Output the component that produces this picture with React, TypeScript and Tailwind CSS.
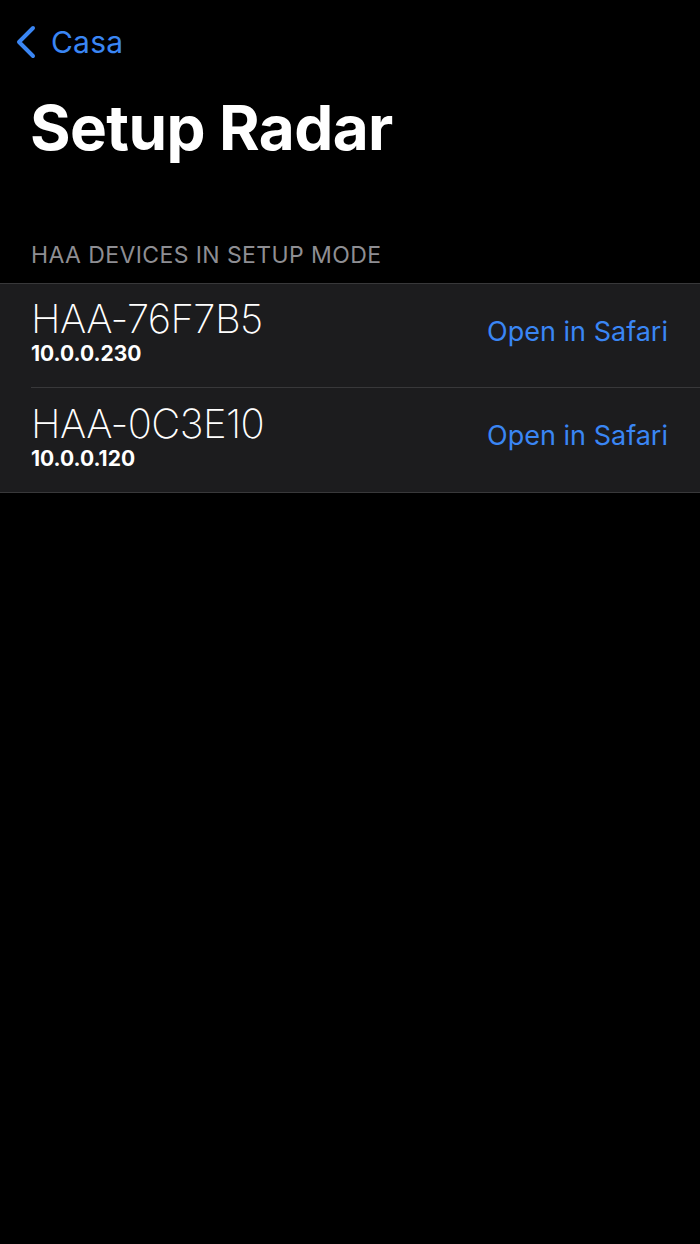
const devices = [
  { name: 'HAA-76F7B5', ip: '10.0.0.230' },
  { name: 'HAA-0C3E10', ip: '10.0.0.120' },
]

function Chevron() {
  return (
    <svg width="22" height="34" viewBox="0 0 22 34" fill="none" className="shrink-0">
      <path d="M18 3 L4 17 L18 31" stroke="#3a86f4" strokeWidth="4" strokeLinecap="round" strokeLinejoin="round" />
    </svg>
  )
}

export default function App() {
  return (
    <div className="min-h-[1244px] w-full bg-black font-['Inter','Liberation_Sans',sans-serif] text-white">
      {/* Nav bar */}
      <div className="flex h-[84px] items-start pl-[15px] pt-[24px]">
        <button className="flex items-center gap-[14px] text-[30px] leading-[36px] text-[#3a86f4]">
          <Chevron />
          <span className="tracking-[0.2px]">Casa</span>
        </button>
      </div>

      {/* Large title */}
      <h1 className="pl-[30px] text-[62px] font-bold leading-[88px] tracking-[-0.6px]">Setup Radar</h1>

      {/* Section header */}
      <div className="mt-[68px] pb-[13px] pl-[31px] text-[23px] leading-[30px] tracking-[0.4px] text-[#8e8e93]">
        HAA DEVICES IN SETUP MODE
      </div>

      {/* List */}
      <div className="border-y border-[#38383a] bg-[#1c1c1e]">
        {devices.map((d, i) => (
          <div key={d.name} className="pl-[31px]">
            <div
              className={`flex h-[104px] items-center pr-[32px] ${
                i < devices.length - 1 ? 'border-b border-[#38383a]' : ''
              }`}
            >
              <div className="flex flex-1 flex-col pb-[10px]">
                <span className="text-[40px] font-extralight leading-[47px] tracking-[-0.6px]">{d.name}</span>
                <span className="text-[21px] font-bold leading-[24px]">{d.ip}</span>
              </div>
              <button className="pb-[8px] text-[27px] leading-[34px] text-[#3a86f4]">Open in Safari</button>
            </div>
          </div>
        ))}
      </div>
    </div>
  )
}
